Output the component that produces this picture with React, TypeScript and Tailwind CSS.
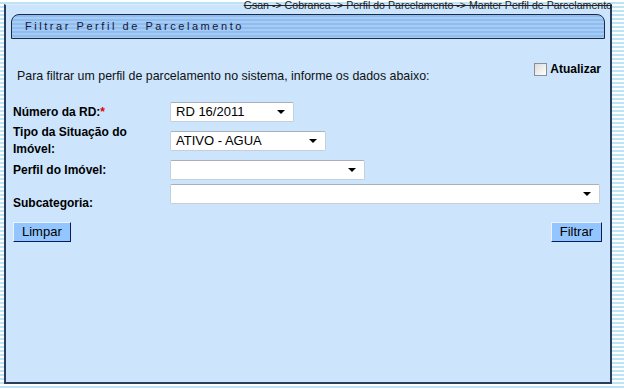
import React from 'react';

const Arrow = () => (
  <svg width="8" height="4" viewBox="0 0 8 4" className="shrink-0">
    <polygon points="0,0 8,0 4,4" fill="#000" />
  </svg>
);

const Select = ({ value, w }: { value?: string; w: string }) => (
  <div
    className={`${w} h-[20px] flex items-center justify-between bg-white border border-[#c6cfd9] border-t-[#a9b0b8] rounded-[2px] pl-[5px] pr-[8px]`}
  >
    <span className="text-[13px] font-normal text-black leading-none">{value}</span>
    <Arrow />
  </div>
);

const Button = ({ label }: { label: string }) => (
  <button className="h-[20px] px-[8px] bg-[#93c6ff] border border-t-[#e8f3ff] border-l-[#e8f3ff] border-b-[#0c1a5a] border-r-[#0c1a5a] text-[13px] text-black leading-none">
    {label}
  </button>
);

export default function App() {
  return (
    <div
      className="relative w-[624px] h-[389px] overflow-hidden bg-[repeating-linear-gradient(to_bottom,#ffffff_0px,#ffffff_2px,#bde3f7_2px,#bde3f7_4px)]"
      style={{ fontFamily: '"Liberation Sans", Arial, sans-serif' }}
    >
      {/* main panel */}
      <div className="absolute left-[4px] top-[4px] w-[608px] h-[380px] bg-[#cce5fd] border-l-2 border-r-2 border-b-2 border-[#2a3d5c] border-t border-t-[#d9ecff]">
        {/* title bar */}
        <div className="mx-[5px] mt-[9px] h-[25px] flex items-center pl-[13px] border border-[#1d2a44] rounded-tl-[8px] rounded-tr-[8px] bg-[repeating-linear-gradient(to_bottom,#8fbdf0_0px,#8fbdf0_2px,#a6cbf5_2px,#a6cbf5_4px)]">
          <span className="text-[11px] tracking-[2.55px] text-[#141838]">Filtrar Perfil de Parcelamento</span>
        </div>

        <div className="flex justify-between pl-[11px] pr-[9px]">
          <p className="mt-[28px] text-[12.4px] text-[#111]">
            Para filtrar um perfil de parcelamento no sistema, informe os dados abaixo:
          </p>
          <label className="mt-[24px] flex items-start gap-[3px]">
            <span className="w-[13px] h-[13px] border border-[#8a8f96] bg-gradient-to-br from-[#dcdcdc] to-[#ffffff]" />
            <span className="text-[12px] font-bold text-black leading-[13px]">Atualizar</span>
          </label>
        </div>

        <div className="flex flex-col pl-[7px] pr-[8px] mt-[16px] text-[12px] font-bold text-black">
          <div className="flex items-center h-[20px]">
            <span className="w-[157px]">
              Número da RD:<span className="text-[#e00000]">*</span>
            </span>
            <Select value="RD 16/2011" w="w-[124px]" />
          </div>

          <div className="flex items-start mt-[2px] h-[34px]">
            <span className="w-[157px] leading-[17px]">
              Tipo da Situação do
              <br />
              Imóvel:
            </span>
            <div className="mt-[7px]">
              <Select value="ATIVO - AGUA" w="w-[156px]" />
            </div>
          </div>

          <div className="flex items-center h-[20px] mt-[2px]">
            <span className="w-[157px]">Perfil do Imóvel:</span>
            <Select w="w-[195px]" />
          </div>

          <div className="flex items-start h-[26px] mt-[4px]">
            <span className="w-[157px] pt-[10px]">Subcategoria:</span>
            <Select w="w-[430px]" />
          </div>

          <div className="flex justify-between mt-[12px] font-normal">
            <Button label="Limpar" />
            <Button label="Filtrar" />
          </div>
        </div>
      </div>

      {/* breadcrumb */}
      <div className="absolute right-[12px] top-[0px] text-[10.6px] leading-[11px] text-[#222] line-through">
        Gsan -&gt; Cobranca -&gt; Perfil do Parcelamento -&gt; Manter Perfil de Parcelamento
      </div>
    </div>
  );
}
